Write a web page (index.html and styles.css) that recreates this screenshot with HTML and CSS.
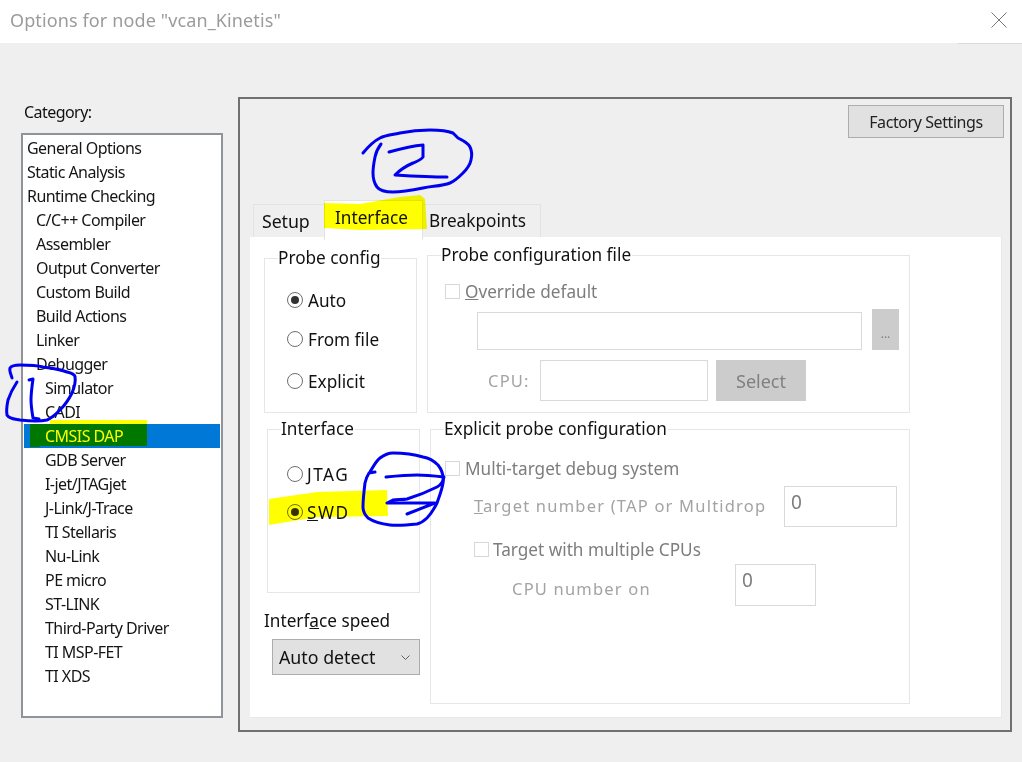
FILE: index.html
```html
<!DOCTYPE html>
<html lang="en">
<head>
<meta charset="utf-8">
<title>Options for node "vcan_Kinetis"</title>
<link rel="stylesheet" href="styles.css">
</head>
<body>
<div class="app">
  <header class="titlebar">
    <h1 class="title">Options for node "vcan_Kinetis"</h1>
    <svg class="close" width="16" height="16" viewBox="0 0 16 16"><path d="M0.5 0.5L15.5 15.5M15.5 0.5L0.5 15.5" fill="none" stroke="#767676" stroke-width="1"/></svg>
  </header>
  <main class="main">
    <aside class="sidebar">
      <div class="category-label">Category:</div>
      <ul class="list">
        <li class="item">General Options</li>
        <li class="item">Static Analysis</li>
        <li class="item">Runtime Checking</li>
        <li class="item l1">C/C++ Compiler</li>
        <li class="item l1">Assembler</li>
        <li class="item l1">Output Converter</li>
        <li class="item l1">Custom Build</li>
        <li class="item l1">Build Actions</li>
        <li class="item l1">Linker</li>
        <li class="item l1">Debugger</li>
        <li class="item l2">Simulator</li>
        <li class="item l2">CADI</li>
        <li class="item l2 selected">CMSIS DAP</li>
        <li class="item l2">GDB Server</li>
        <li class="item l2">I-jet/JTAGjet</li>
        <li class="item l2">J-Link/J-Trace</li>
        <li class="item l2">TI Stellaris</li>
        <li class="item l2">Nu-Link</li>
        <li class="item l2">PE micro</li>
        <li class="item l2">ST-LINK</li>
        <li class="item l2">Third-Party Driver</li>
        <li class="item l2">TI MSP-FET</li>
        <li class="item l2">TI XDS</li>
      </ul>
    </aside>
    <section class="panel">
      <div class="panel-top"><button class="factory">Factory Settings</button></div>
      <nav class="tabs">
        <div class="tab tab-setup">Setup</div>
        <div class="tab tab-active">Interface</div>
        <div class="tab tab-break">Breakpoints</div>
      </nav>
      <div class="page">
        <div class="col-left">
          <fieldset class="group probe-group">
            <legend class="legend">Probe config</legend>
            <div class="radio-list probe-list">
              <div class="radio-row"><span class="radio checked"></span>Auto</div>
              <div class="radio-row"><span class="radio"></span>From file</div>
              <div class="radio-row radio-row-far"><span class="radio"></span>Explicit</div>
            </div>
          </fieldset>
          <fieldset class="group iface-group">
            <legend class="legend">Interface</legend>
            <div class="radio-list iface-list">
              <div class="radio-row"><span class="radio"></span><span class="caps">JTAG</span></div>
              <div class="radio-row"><span class="radio checked"></span><span class="caps"><u>S</u>WD</span></div>
            </div>
          </fieldset>
          <div class="speed-label">Interf<u>a</u>ce speed</div>
          <div class="combo"><span>Auto detect</span>
            <svg class="chev" width="9" height="5" viewBox="0 0 9 5"><path d="M0.5 0.5L4.5 4.5L8.5 0.5" fill="none" stroke="#606060" stroke-width="1"/></svg>
          </div>
        </div>
        <div class="col-right">
          <fieldset class="group file-group">
            <legend class="legend">Probe configuration file</legend>
            <div class="file-body">
              <div class="check-row"><span class="check"></span><span class="muted"><u>O</u>verride default</span></div>
              <div class="file-row">
                <div class="field file-field"></div>
                <div class="ghost-btn dots">...</div>
              </div>
              <div class="cpu-row">
                <span class="hinted cpu-label">CPU:</span>
                <div class="field cpu-field"></div>
                <div class="ghost-btn select-btn">Select</div>
              </div>
            </div>
          </fieldset>
          <fieldset class="group explicit-group">
            <legend class="legend">Explicit probe configuration</legend>
            <div class="explicit-body">
              <div class="check-row"><span class="check"></span><span class="muted">Multi-target debug system</span></div>
              <div class="target-row">
                <span class="hinted target-label"><u>T</u>arget number (TAP or Multidrop</span>
                <div class="field target-field">0</div>
              </div>
              <div class="check-row check-row-sub"><span class="check"></span><span class="muted">Target with multiple CPUs</span></div>
              <div class="cpunum-row">
                <span class="hinted cpunum-label">CPU number on</span>
                <div class="field cpunum-field">0</div>
              </div>
            </div>
          </fieldset>
        </div>
      </div>
    </section>
  </main>
  <svg class="overlay highlights" width="1022" height="762" viewBox="0 0 1022 762">
    <path d="M324 203L360 204L400 197L420 195L425 199L427 229L360 230L324 228Z" fill="#ffff00"/>
    <path d="M50 420H147V446H40V447H30V424H50Z" fill="#ffff00"/>
    <path d="M269 499L317 492L387 490L388 516L317 517L269 525Z" fill="#ffff00"/>
  </svg>
  <svg class="overlay pen" width="1022" height="762" viewBox="0 0 1022 762">
    <path d="M363 153C368 147 374 141 380 138C386 135 392 135 400 133C410 131 420 130 430 130C440 130 448 131 453 133L458 138C464 141 468 143 470 147C472 151 472 156 471 160C470 165 467 169 463 173C459 177 455 181 450 183C442 186 433 186 423 188C413 190 403 192 393 192C386 192 380 191 377 187C374 183 373 179 373 173C373 167 374 162 375 157C376 152 378 148 381 144"/>
    <path d="M389 152C400 149 412 146 423 145L423 157C421 160 418 161 413 163C406 166 400 170 395 175C412 176 430 177 447 177"/>
    <path d="M12 378C11 374 9 371 10 368C12 365 16 365 20 365C28 365 36 365 43 367C51 368 60 369 67 372C71 373 75 374 75 377C76 382 74 388 72 393C69 399 65 405 60 410C56 414 52 418 47 420C38 422 29 421 20 420C15 419 9 419 7 415C6 410 7 405 8 400C10 394 13 388 17 382"/>
    <path d="M29 380L33 379C32 386 31 393 31 400C31 406 32 412 33 418L39 419"/>
    <path d="M375 472L369 473C367 476 366 479 365 483C364 491 363 499 363 507C363 511 365 515 368 518C374 522 382 524 390 525C399 526 408 525 417 524C421 523 424 521 427 518C431 514 434 509 437 503C439 497 442 490 443 483C444 476 442 470 438 465C434 461 429 458 423 457C413 454 403 453 393 453C388 453 384 455 380 458C376 461 373 467 370 472"/>
    <path d="M386 477C396 476 407 475 417 475C426 475 435 476 444 477C443 482 441 485 437 487C427 492 417 496 407 499C402 500 397 499 393 500L387 503H435L407 514"/>
  </svg>
</div>
</body>
</html>
```

FILE: styles.css
```css
* { box-sizing: border-box; }
html, body { margin: 0; padding: 0; }
body {
  width: 1022px;
  height: 762px;
  overflow: hidden;
  background: #efefef;
  font-family: "Noto Sans", "Open Sans", sans-serif;
  font-size: 17.2px;
  color: #111;
}
.app { position: relative; width: 1022px; height: 762px; display: flex; flex-direction: column; }

.titlebar {
  position: relative;
  height: 43px;
  flex: none;
  background: #fff;
  display: flex;
  align-items: center;
  justify-content: space-between;
  padding: 0 15px 0 10px;
}
.titlebar::after {
  content: "";
  position: absolute;
  right: 0;
  bottom: -1px;
  width: 64px;
  height: 1px;
  background: #dadada;
}
.title { margin: 0 0 4px; font-size: 18px; font-weight: 400; color: #9b9b9b; letter-spacing: 0.12px; }
.close { margin-bottom: 4px; }

.main { display: flex; padding: 54px 10px 0 21px; flex: 1; }
.sidebar { width: 202px; flex: none; margin-right: 15px; font-size: 16px; letter-spacing: -0.55px; }
.category-label { height: 36px; padding: 4px 0 0 3px; line-height: 22px; }
.list {
  list-style: none;
  margin: 0;
  padding: 1px;
  width: 202px;
  height: 585px;
  background: #fff;
  border: 2px solid #8f949b;
}
.item { height: 24px; line-height: 25px; padding-left: 3px; white-space: nowrap; color: #151515; }
.l1 { padding-left: 12px; }
.l2 { padding-left: 21px; }
.selected { background: #0078d7; color: #fff; width: 196px; }

.panel {
  width: 774px;
  height: 635px;
  border: 2px solid #707070;
  display: flex;
  flex-direction: column;
  padding: 6px 8px 12px 10px;
}
.panel-top { display: flex; justify-content: flex-end; margin-right: -2px; height: 33px; }
.factory {
  width: 156px;
  height: 33px;
  background: #e1e1e1;
  border: 1px solid #adadad;
  padding: 0;
  font: inherit;
  font-size: 16px;
  letter-spacing: -0.42px;
  color: #222;
}
.tabs { display: flex; align-items: flex-end; margin-top: 62px; height: 37px; padding-left: 3px; position: relative; z-index: 1; }
.tab { height: 33px; border: 1px solid #e3e3e3; border-bottom: 0; line-height: 32px; }
.tab-setup { width: 71px; padding: 0 0 0 8px; border-right: 0; font-size: 17.8px; letter-spacing: -0.1px; }
.tab-active { width: 99px; height: 40px; margin-bottom: -3px; background: #fff; padding: 0 0 0 10px; line-height: 33px; }
.tab-break { width: 118px; padding: 0 0 0 6px; border-left: 0; }

.page {
  flex: 1;
  background: #fff;
  border-right: 1px solid #e8e8e8;
  border-bottom: 1px solid #e8e8e8;
  display: flex;
  min-height: 0;
}
.col-left { width: 170px; flex: none; padding: 10px 0 0 14px; }
.col-right { width: 483px; flex: none; margin-left: 7px; padding-top: 7px; }

.group { margin: 0; padding: 0; border: 1px solid #e6e6e6; min-width: 0; }
.legend { margin-left: 13px; padding: 0 1px 0 0; line-height: 22px; height: 22px; }

.probe-group { width: 153px; height: 166px; }
.iface-group { width: 153px; height: 175px; margin: 5px 0 0 3px; }
.radio-list { display: flex; flex-direction: column; }
.probe-list { padding: 19px 0 0 22px; gap: 15px; }
.iface-list { padding: 22px 0 0 19px; gap: 14px; }
.radio-row { display: flex; align-items: center; height: 24px; gap: 5px; white-space: nowrap; }
.iface-list .radio-row { gap: 4px; }
.caps { letter-spacing: 1.5px; }
.radio-row-far { margin-top: 3px; }
.radio {
  width: 16px;
  height: 16px;
  flex: none;
  border: 1px solid #6f6f6f;
  border-radius: 50%;
  display: flex;
  align-items: center;
  justify-content: center;
  background: #fff;
}
.checked::after { content: ""; width: 8px; height: 8px; border-radius: 50%; background: #333; }

.speed-label { margin-top: 17px; height: 22px; line-height: 22px; }
.combo {
  margin: 7px 0 0 8px;
  width: 148px;
  height: 36px;
  background: #e1e1e1;
  border: 1px solid #adadad;
  display: flex;
  align-items: center;
  justify-content: space-between;
  padding: 0 9px 0 6px;
  font-size: 17.8px;
}

.file-group { height: 169px; }
.file-body { padding: 13px 0 0 17px; }
.explicit-group { height: 286px; margin: 5px 0 0 3px; }
.explicit-body { padding: 16px 0 0 14px; }
.check-row { display: flex; align-items: center; height: 24px; gap: 5px; white-space: nowrap; }
.check { width: 15px; height: 15px; flex: none; border: 1px solid #d8d8d8; background: #fff; }
.muted { color: #7d7d7d; }
.hinted { color: #a3a3a3; letter-spacing: 1.2px; white-space: nowrap; font-size: 16.5px; }
.field { background: #fff; border: 1px solid #d9d9d9; color: #7d7d7d; padding: 2px 0 0 6px; font-size: 19px; line-height: 26px; }
.ghost-btn { background: #cccccc; color: #808080; display: flex; align-items: center; justify-content: center; }

.file-row { display: flex; align-items: flex-end; margin: 6px 0 0 32px; gap: 10px; }
.file-field { width: 385px; height: 38px; }
.dots { width: 27px; height: 41px; padding-top: 8px; font-size: 12px; }
.cpu-row { display: flex; align-items: center; margin: 10px 0 0 43px; }
.cpu-label { width: 52px; }
.cpu-field { width: 168px; height: 41px; }
.select-btn { width: 90px; height: 41px; margin-left: 8px; font-size: 18px; }

.target-row { display: flex; align-items: center; margin: 6px 0 0 29px; }
.target-label { width: 310px; margin-bottom: 3px; }
.target-field { width: 113px; height: 41px; }
.check-row-sub { margin: 10px 0 0 29px; gap: 4px; }
.cpunum-row { display: flex; align-items: center; margin: 3px 0 0 67px; }
.cpunum-label { width: 223px; margin-top: 6px; }
.cpunum-field { width: 81px; height: 42px; }

.overlay { position: absolute; left: 0; top: 0; z-index: 2; pointer-events: none; }
.highlights { mix-blend-mode: multiply; }
.pen path { fill: none; stroke: #0000f0; stroke-width: 3; stroke-linecap: round; stroke-linejoin: round; }
```
